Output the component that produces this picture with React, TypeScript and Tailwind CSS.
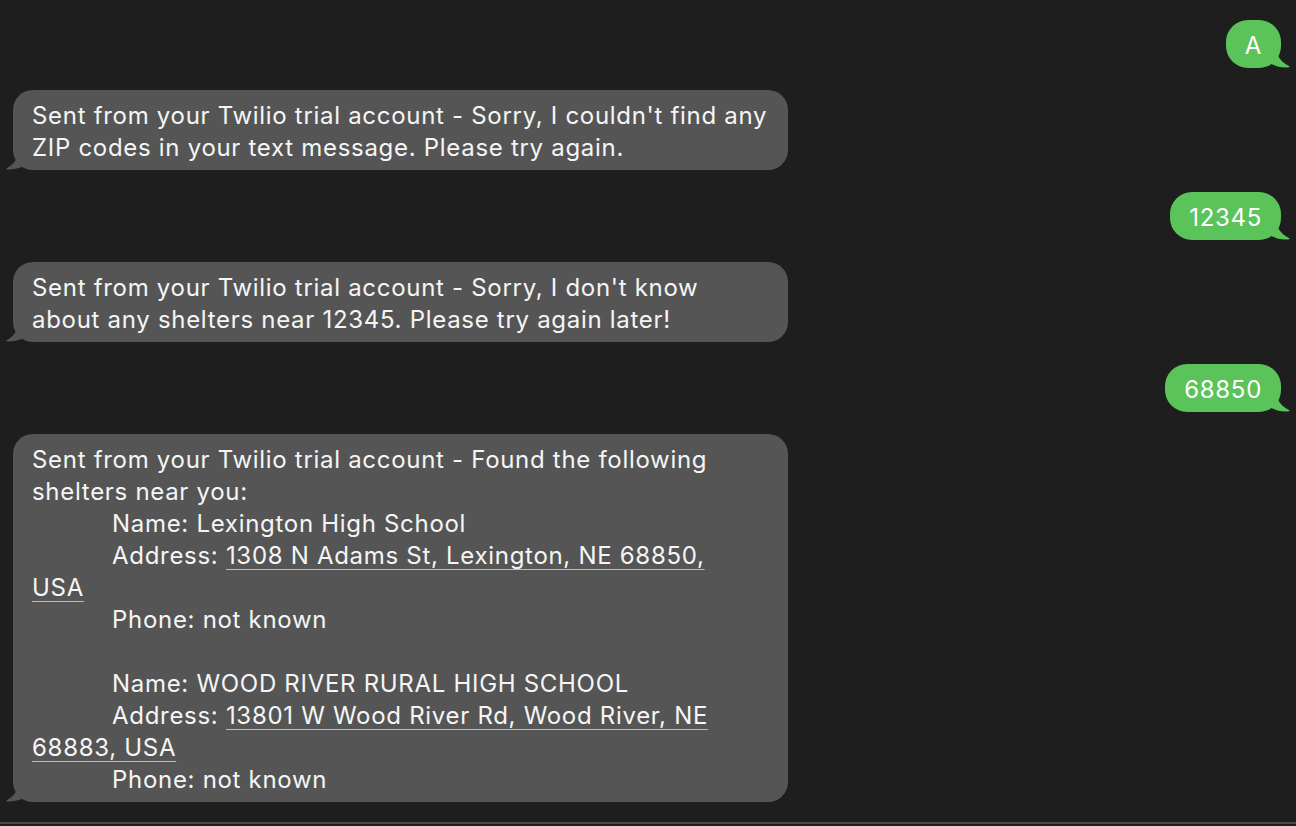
import React from "react";

const font = { fontFamily: "Inter, 'Noto Sans', sans-serif" };

function TailRight() {
  return (
    <svg className="absolute bottom-0 right-[-11px]" width="24" height="22" viewBox="0 0 24 22">
      <path d="M0 0 L8 0 C8 8 12 16 21 20 C22 20.6 22.5 21.3 20 21.4 C12 21.8 6 20 0 16 Z" fill="#5ac35a" />
    </svg>
  );
}

function TailLeft() {
  return (
    <svg className="absolute bottom-0 left-[-10px]" width="24" height="22" viewBox="0 0 24 22">
      <path d="M24 0 L16 0 C16 8 12 16 4 20 C3 20.6 2.5 21.3 5 21.4 C12 21.8 18 20 24 16 Z" fill="#555555" />
    </svg>
  );
}

function Sent({ text }: { text: string }) {
  return (
    <div className="flex justify-end pr-[15px]">
      <div className="relative rounded-[22px] bg-[#5ac35a] px-[19px] pt-[10px] pb-[6px] text-[24px] leading-[32px] tracking-[0.7px] text-white min-w-[54px] text-center">
        <span className="relative z-10">{text}</span>
        <TailRight />
      </div>
    </div>
  );
}

function Received({ children }: { children: React.ReactNode }) {
  return (
    <div className="flex justify-start pl-[13px]">
      <div className="relative w-[775px] rounded-[20px] bg-[#555555] pl-[19px] pr-4 pt-[10px] pb-[6px] text-[24px] leading-[32px] tracking-[0.7px] text-[#f5f5f5]">
        <div className="relative z-10 whitespace-nowrap">{children}</div>
        <TailLeft />
      </div>
    </div>
  );
}

const Indent = () => <span className="inline-block w-[80px]" />;
const U = ({ children }: { children: React.ReactNode }) => (
  <span className="underline decoration-1 underline-offset-[5px] decoration-[#bdbdbd]">{children}</span>
);

export default function App() {
  return (
    <div className="w-[1296px] h-[826px] bg-[#1e1e1e] overflow-hidden flex flex-col" style={font}>
      <div className="flex-1 flex flex-col gap-[22px] pt-5">
        <Sent text="A" />
        <Received>
          Sent from your Twilio trial account - Sorry, I couldn't find any
          <br />
          ZIP codes in your text message. Please try again.
        </Received>
        <Sent text="12345" />
        <Received>
          Sent from your Twilio trial account - Sorry, I don't know
          <br />
          about any shelters near 12345. Please try again later!
        </Received>
        <Sent text="68850" />
        <Received>
          Sent from your Twilio trial account - Found the following
          <br />
          shelters near you:
          <br />
          <Indent />Name: Lexington High School
          <br />
          <Indent />Address: <U>1308 N Adams St, Lexington, NE 68850,</U>
          <br />
          <U>USA</U>
          <br />
          <Indent />Phone: not known
          <br />
          <br />
          <Indent />Name: WOOD RIVER RURAL HIGH SCHOOL
          <br />
          <Indent />Address: <U>13801 W Wood River Rd, Wood River, NE</U>
          <br />
          <U>68883, USA</U>
          <br />
          <Indent />Phone: not known
        </Received>
      </div>
      <div className="h-[2px] bg-[#4a4a4a] mb-[2px]" />
    </div>
  );
}
